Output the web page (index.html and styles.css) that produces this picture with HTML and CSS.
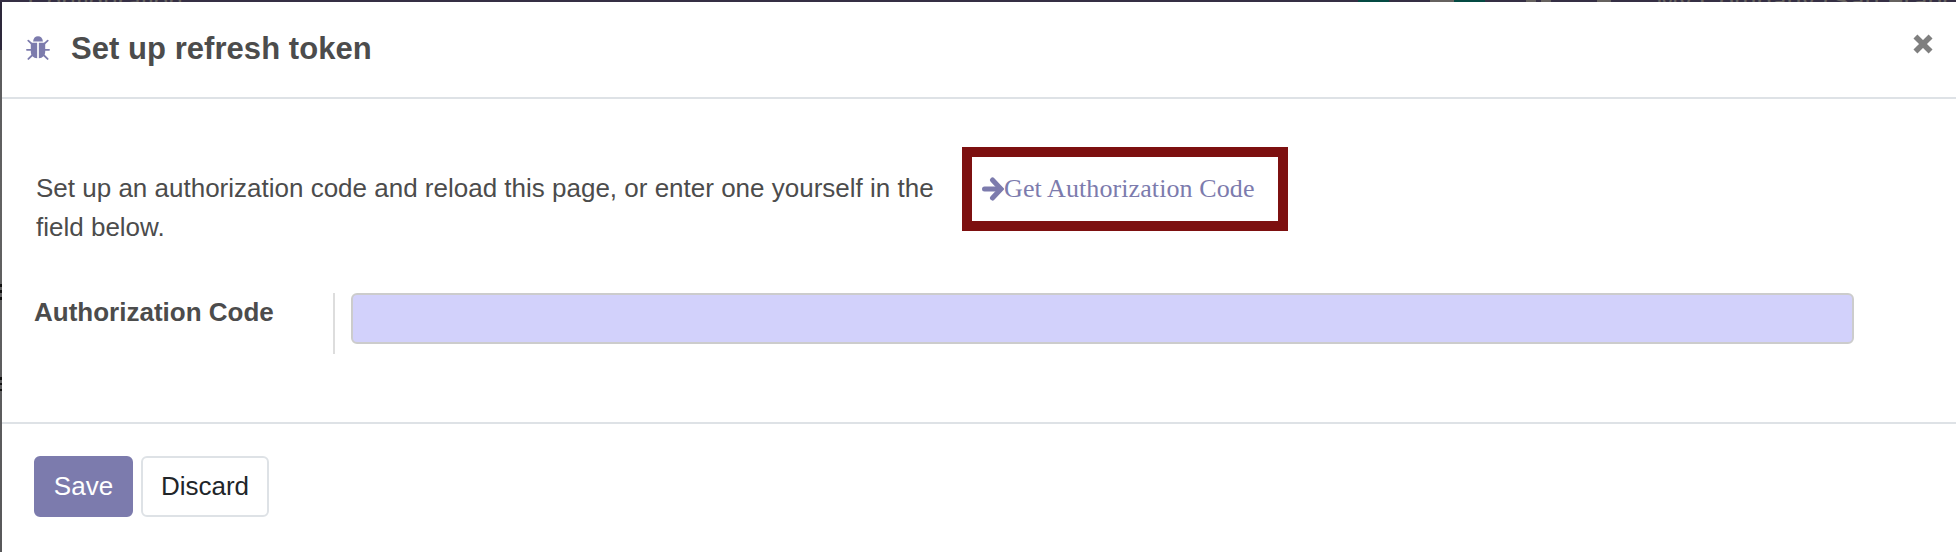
FILE: index.html
```html
<!DOCTYPE html>
<html lang="en">
<head>
<meta charset="utf-8">
<title>Set up refresh token</title>
<link rel="stylesheet" href="styles.css">
</head>
<body>
<div class="topbar"><span class="crumb">Configuration</span><span class="chip"></span><span class="glyph wide"></span><span class="chip"></span><span class="glyph chat"></span><span class="glyph small"></span><span class="glyph tool"></span><span class="company">My Company (San Francisco)</span></div>
<div class="main">
<div class="edge"></div>
<section class="dialog">
  <header class="header">
    <svg class="bug" viewBox="0 0 23 23" fill="none" stroke="#7c7bad" stroke-width="1.7" stroke-linecap="round">
      <path d="M6.8 5.2C7 2 9 .3 11.5.3S16 2 16.2 5.2Z" fill="#7c7bad" stroke="none"/>
      <path d="M4.6 6.4H10.7V21.3C7 21 4.6 18.3 4.6 15ZM12.3 6.4H18.4V15C18.4 18.3 16 21 12.3 21.3Z" fill="#7c7bad" stroke="none"/>
      <path d="M2.2 4.4 5.8 7.8M20.8 4.4 17.2 7.8M.9 13.2H5M22.1 13.2H18M2.3 22 6.2 18.2M20.7 22 16.8 18.2"/>
    </svg>
    <h1 class="title">Set up refresh token</h1>
    <svg class="close" viewBox="0 0 18 18"><path d="M2.2 2.2 15.8 15.8M15.8 2.2 2.2 15.8" stroke="#7f7f7f" stroke-width="5" fill="none"/></svg>
  </header>
  <div class="body">
    <div class="intro">
      <p class="message">Set up an authorization code and reload this page, or enter one yourself in the field below.</p>
      <a class="link"><svg class="arrow" viewBox="0 0 22 24" fill="none" stroke="#7c7bad" stroke-width="5"><path d="M2.5 12H18" stroke-linecap="round"/><path d="M10.5 3 19 12 10.5 21" stroke-linecap="round"/></svg><span class="link-text">Get Authorization Code</span></a>
    </div>
    <div class="field">
      <label class="label" for="code">Authorization Code</label>
      <div class="cell"><input class="input" id="code" type="text"></div>
    </div>
  </div>
  <footer class="footer">
    <button class="btn save">Save</button>
    <button class="btn discard">Discard</button>
  </footer>
</section>
</div>
</body>
</html>
```

FILE: styles.css
```css
* { box-sizing: border-box; }
body { margin: 0; height: 552px; overflow: hidden; background: #fff; color: #4c4c4c; font: 26px/39px "Liberation Sans", Arial, sans-serif; }
.topbar { height: 2px; overflow: hidden; display: flex; background: #352f44; color: #66625f; font-size: 26px; line-height: 2px; }
.topbar > * { flex: none; }
.crumb { width: 1358px; padding-left: 28px; }
.chip { width: 31px; background: #044a43; }
.glyph { background: #66625f; }
.wide { width: 24px; margin-left: 41px; }
.chat { width: 10px; margin-left: 41px; }
.small { width: 10px; margin-left: 5px; }
.tool { width: 14px; margin-left: 46px; }
.company { margin-left: 45px; font-size: 27px; white-space: nowrap; }
.main { display: flex; height: 550px; }
.edge { width: 2px; background:
  linear-gradient(#111, #111) 0 282px / 2px 3px no-repeat,
  linear-gradient(#111, #111) 0 288px / 2px 3px no-repeat,
  linear-gradient(#111, #111) 0 295px / 2px 3px no-repeat,
  linear-gradient(#111, #111) 0 375px / 2px 3px no-repeat,
  linear-gradient(#111, #111) 0 381px / 2px 2px no-repeat,
  linear-gradient(#111, #111) 0 387px / 2px 2px no-repeat,
  linear-gradient(#2d283b 0 48px, #5b5b5d 48px, #626262 200px, #58585a); }
.dialog { flex: 1; }
.header { display: flex; height: 97px; border-bottom: 2px solid #dee2e6; padding: 0 24px; }
.bug { width: 24px; height: 24px; margin-top: 34px; }
.title { margin: 27px 0 0 21px; font-size: 31px; line-height: 39px; letter-spacing: 0.05px; }
.close { width: 20px; height: 20px; margin: 32px -1px 0 auto; }
.body { height: 325px; border-bottom: 2px solid #dee2e6; padding: 48px 102px 0 32px; }
.intro { display: flex; height: 146px; }
.message { width: 926px; margin: 22px 0 0 2px; }
.link { display: flex; align-items: center; width: 326px; height: 84px; border: 10px solid #7d1010; padding-left: 10px; color: #7c7bad; font-family: "Liberation Serif", "Times New Roman", serif; letter-spacing: 0.1px; white-space: nowrap; }
.link-text { padding-bottom: 2px; }
.arrow { width: 22px; height: 24px; margin-bottom: 1px; }
.field { display: flex; }
.label { width: 299px; font-weight: bold; }
.cell { flex: 1; height: 61px; border-left: 2px solid #ddd; padding-left: 16px; }
.input { display: block; width: 100%; height: 51px; border: 2px solid #ccc; border-radius: 6px; background: #d2d1fb; }
.footer { display: flex; gap: 8px; padding: 32px; }
.btn { height: 61px; border-radius: 6px; padding: 0; font: inherit; }
.save { width: 99px; border: 2px solid #7c7bad; background: #7c7bad; color: #fff; }
.discard { width: 128px; border: 2px solid #dee2e6; background: #fff; color: #212529; }
```
